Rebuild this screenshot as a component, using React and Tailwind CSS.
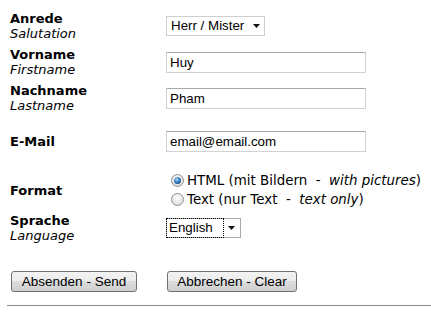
import React from "react";

const verdana = "font-['DejaVu_Sans',Verdana,sans-serif]";
const arial = "font-['Liberation_Sans',Arial,sans-serif]";

function Arrow() {
  return (
    <svg width="7" height="4" viewBox="0 0 7 4" className="shrink-0">
      <polygon points="0,0 7,0 3.5,4" fill="#111" />
    </svg>
  );
}

// label cell: German bold, English italic below
function Label({ de, en }) {
  return (
    <div className="w-[156px] shrink-0 leading-[15px] text-[13px] text-black">
      <div className="font-bold">{de}</div>
      {en && <div className="italic">{en}</div>}
    </div>
  );
}

function Row({ h, de, en, children }) {
  return (
    <div className={`flex items-center ${h}`}>
      <Label de={de} en={en} />
      <div className="flex">{children}</div>
    </div>
  );
}

function TextInput({ value }) {
  return (
    <input
      readOnly
      defaultValue={value}
      className={`${arial} w-[200px] h-[21px] border border-[#d2d2d2] border-t-[#a8a8a8] bg-white px-[3px] text-[13.33px] text-black outline-none`}
    />
  );
}

function Radio({ checked }) {
  return (
    <span className="w-[13px] h-[13px] rounded-full border border-[#8e8f8f] bg-[radial-gradient(circle_at_50%_35%,#ffffff,#d4d4d4)] flex items-center justify-center shrink-0">
      {checked && (
        <span className="w-[7px] h-[7px] rounded-full bg-[radial-gradient(circle_at_40%_35%,#a8d8fa,#2a6db5_55%,#0f3a6a)]" />
      )}
    </span>
  );
}

function Button({ label, w }) {
  return (
    <button
      className={`${arial} ${w} h-[21px] border border-[#707070] rounded-[3px] bg-[linear-gradient(#f3f3f3_0%,#ebebeb_50%,#dddddd_50%,#cfcfcf_100%)] text-[13.5px] leading-none text-black`}
    >
      {label}
    </button>
  );
}

export default function App() {
  return (
    <div className={`${verdana} bg-white w-[431px] h-[321px] overflow-hidden pt-[8px]`}>
      <div className="pl-[10px]">
        <Row h="h-[36px]" de="Anrede" en="Salutation">
          <div className={`${arial} w-[99px] h-[20px] border border-[#cfcfcf] bg-white flex items-center justify-between pl-[4px] pr-[4px] text-[13.33px] text-black`}>
            <span>Herr / Mister</span>
            <Arrow />
          </div>
        </Row>
        <Row h="h-[36px]" de="Vorname" en="Firstname">
          <TextInput value="Huy" />
        </Row>
        <Row h="h-[36px]" de="Nachname" en="Lastname">
          <TextInput value="Pham" />
        </Row>
        <Row h="h-[51px]" de="E-Mail">
          <TextInput value="email@email.com" />
        </Row>
        <Row h="h-[46px]" de="Format">
          <div className="flex flex-col pl-[5px] text-[13.4px] leading-[19px] text-black">
            <div className="flex items-center gap-[3px] whitespace-pre">
              <Radio checked />
              <span>
                HTML (mit Bildern  -  <i>with pictures</i>)
              </span>
            </div>
            <div className="flex items-center gap-[3px] whitespace-pre">
              <Radio />
              <span>
                Text (nur Text  -  <i>text only</i>)
              </span>
            </div>
          </div>
        </Row>
        <Row h="h-[30px]" de="Sprache" en="Language">
          <div className={`${arial} w-[75px] h-[20px] border border-[#a9a9a9] bg-white flex text-[13.33px] text-black`}>
            <span className="w-[58px] -m-px border border-dotted border-black flex items-center pl-[2px]">
              English
            </span>
            <span className="flex-1 flex items-center justify-center">
              <Arrow />
            </span>
          </div>
        </Row>
        <div className="flex mt-[26px]">
          <div className="w-[156px] shrink-0 pl-[1px]">
            <Button label="Absenden - Send" w="w-[126px]" />
          </div>
          <div className="pl-[1px]">
            <Button label="Abbrechen - Clear" w="w-[130px]" />
          </div>
        </div>
      </div>
      <div className="ml-[7px] mt-[12px] border-t border-[#8a8a8a]" />
    </div>
  );
}
